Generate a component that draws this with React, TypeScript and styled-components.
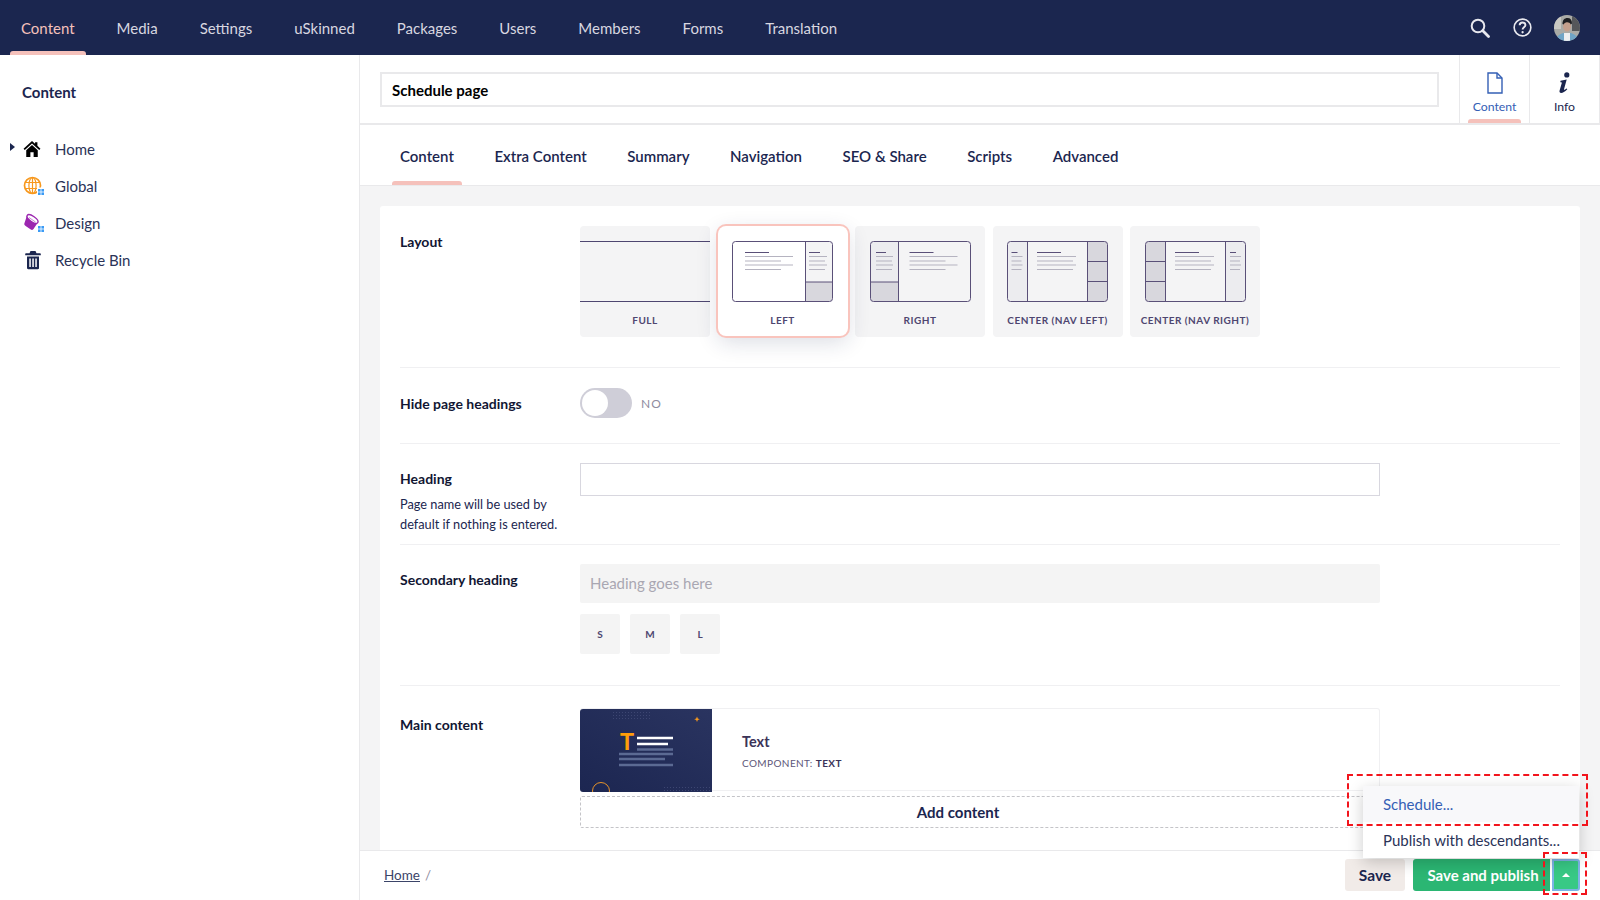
import styled, { createGlobalStyle } from 'styled-components'

const GlobalStyle = createGlobalStyle`
  html, body, #root {
    margin: 0;
    height: 100%;
  }

  body {
    font-family: Lato, "Noto Sans", sans-serif;
    color: #1b264f;
    background: #fff;
  }

  * {
    box-sizing: border-box;
  }
`

const Shell = styled.div`
  position: relative;
  width: 100%;
  height: 100vh;
  display: flex;
  flex-direction: column;
  overflow: hidden;
`

const TopBar = styled.header`
  flex: 0 0 55px;
  display: flex;
  justify-content: space-between;
  background: #1b264f;
`

const TopNav = styled.nav`
  display: flex;
`

const TopNavItem = styled.a<{ $active?: boolean }>`
  position: relative;
  display: flex;
  align-items: center;
  padding: 0 21px;
  font-size: 15px;
  color: ${(p) => (p.$active ? '#f5c1bb' : '#d8d7e0')};

  &::after {
    content: '';
    display: ${(p) => (p.$active ? 'block' : 'none')};
    position: absolute;
    left: 10px;
    right: 10px;
    bottom: 0;
    height: 4px;
    border-radius: 3px 3px 0 0;
    background: #f5c1bb;
  }
`

const TopTools = styled.div`
  display: flex;
  align-items: center;
  gap: 22.5px;
  padding-right: 20px;
`

const Body = styled.div`
  flex: 1;
  min-height: 0;
  display: flex;
`

const Sidebar = styled.aside`
  flex: 0 0 360px;
  border-right: 1px solid #e9e9eb;
  padding-top: 27px;
`

const SidebarTitle = styled.div`
  padding-left: 22px;
  margin-bottom: 28px;
  font-size: 15px;
  line-height: 20px;
  font-weight: 700;
`

const TreeRow = styled.div`
  display: grid;
  grid-template-columns: 23px 32px 1fr;
  align-items: center;
  height: 37px;
  font-size: 15px;
  color: #2a3358;
`

const TreeCaret = styled.span`
  justify-self: start;
  margin: -4px 0 0 10px;
  border-style: solid;
  border-width: 4px 0 4px 5px;
  border-color: transparent transparent transparent #1b264f;
`

const Main = styled.main`
  flex: 1;
  min-width: 0;
  display: flex;
  flex-direction: column;
`

const EditorHeader = styled.div`
  flex: 0 0 70px;
  display: flex;
  align-items: stretch;
  border-bottom: 2px solid #e9e9eb;
`

const TitleInput = styled.input`
  flex: 1;
  min-width: 0;
  height: 35px;
  margin: 17px 20px 0;
  padding: 0 10px;
  border: 2px solid #e9e9eb;
  font-family: inherit;
  font-size: 15px;
  font-weight: 700;
  color: #000;
  outline: none;
`

const AppTab = styled.div<{ $active?: boolean }>`
  position: relative;
  flex: 0 0 70px;
  display: flex;
  flex-direction: column;
  align-items: center;
  padding-top: 17px;
  gap: 5px;
  border-left: 1px solid #e9e9eb;
  font-size: 12.25px;
  line-height: 16px;
  color: ${(p) => (p.$active ? '#3560b5' : '#1b264f')};

  &:last-child {
    flex-basis: 71px;
    border-right: 1px solid #e9e9eb;
  }

  &::after {
    content: '';
    display: ${(p) => (p.$active ? 'block' : 'none')};
    position: absolute;
    left: 8px;
    right: 8px;
    bottom: 0;
    height: 4px;
    border-radius: 3px 3px 0 0;
    background: #f5c1bb;
  }
`

const Tabs = styled.div`
  flex: 0 0 61px;
  display: flex;
  gap: 24.5px;
  padding-left: 32px;
  border-bottom: 1px solid #e9e9eb;
`

const Tab = styled.a<{ $active?: boolean }>`
  position: relative;
  display: flex;
  align-items: center;
  padding: 2px 8px 0;
  font-size: 15px;
  font-weight: 600;
  color: #1b264f;

  &::after {
    content: '';
    display: ${(p) => (p.$active ? 'block' : 'none')};
    position: absolute;
    left: 0;
    right: 0;
    bottom: 0;
    height: 4px;
    border-radius: 3px 3px 0 0;
    background: #f5c1bb;
  }
`

const Content = styled.div`
  flex: 1;
  min-height: 0;
  overflow: hidden;
  padding: 20px 20px 0;
  background: #f4f4f5;
`

const Panel = styled.div`
  min-height: 100%;
  padding: 0 20px;
  background: #fff;
  border-radius: 3px 3px 0 0;
`

const Row = styled.section<{ $top: number; $bottom: number; $last?: boolean }>`
  display: grid;
  grid-template-columns: 180px 800px;
  padding: ${(p) => p.$top}px 0 ${(p) => p.$bottom}px;
  border-bottom: ${(p) => (p.$last ? 'none' : '1px solid #f0f0f2')};
`

const FieldLabel = styled.div<{ $offset?: number }>`
  margin-top: ${(p) => p.$offset ?? 5.5}px;
  font-size: 14px;
  line-height: 20px;
  font-weight: 700;
  color: #111633;
`

const FieldHint = styled.div`
  margin-top: 5px;
  font-size: 12.75px;
  line-height: 20px;
  color: #1b264f;
`

const TileRow = styled.div`
  display: flex;
  align-items: flex-start;
  gap: 7.5px;
  width: 690px;
`

const Tile = styled.div<{ $selected?: boolean }>`
  position: relative;
  flex: 0 0 130px;
  height: ${(p) => (p.$selected ? '110px' : '111px')};
  display: flex;
  flex-direction: column;
  align-items: center;
  padding-top: 15px;
  border-radius: ${(p) => (p.$selected ? '8px' : '4px')};
  background: ${(p) => (p.$selected ? '#fff' : '#f4f4f5')};
  box-shadow: ${(p) => (p.$selected ? '0 0 0 2px #f9c4bd, 0 6px 22px rgba(27, 38, 79, 0.16)' : 'none')};
  z-index: ${(p) => (p.$selected ? 1 : 0)};
`

const TileLabel = styled.div`
  margin-top: 12px;
  font-size: 10px;
  line-height: 12px;
  font-weight: 700;
  letter-spacing: 0.5px;
  color: #4e4670;
`

const FullBand = styled.div`
  width: 100%;
  height: 61px;
  border-top: 1px solid #4e4670;
  border-bottom: 1px solid #4e4670;
`

const ToggleWrap = styled.div`
  display: flex;
  align-items: center;
  gap: 9px;
`

const ToggleTrack = styled.div`
  width: 52px;
  height: 30px;
  padding: 2px;
  border-radius: 15px;
  background: #cfced8;
`

const ToggleThumb = styled.div`
  width: 26px;
  height: 26px;
  border-radius: 50%;
  background: #fff;
`

const ToggleText = styled.span`
  font-size: 12px;
  letter-spacing: 1px;
  color: #8f8ca0;
`

const HeadingInput = styled.input`
  display: block;
  width: 100%;
  height: 33px;
  padding: 0 10px;
  border: 1px solid #d8d7df;
  outline: none;
`

const GreyInput = styled.input`
  display: block;
  width: 100%;
  height: 39px;
  padding: 0 10px;
  border: none;
  border-radius: 2px;
  background: #f4f4f4;
  font-family: inherit;
  font-size: 15px;
  outline: none;

  &::placeholder {
    color: #a9a7b2;
    opacity: 1;
  }
`

const SizeButtons = styled.div`
  display: flex;
  gap: 10px;
  margin-top: 11px;
`

const SizeButton = styled.div`
  width: 40px;
  height: 40px;
  display: flex;
  align-items: center;
  justify-content: center;
  background: #f4f4f4;
  border-radius: 2px;
  font-size: 10px;
  font-weight: 700;
  color: #4e4670;
`

const Card = styled.div`
  display: flex;
  height: 83px;
  border: 1px solid #f0f0f2;
  border-left: none;
  border-radius: 3px;
`

const CardThumb = styled.svg`
  flex: 0 0 132px;
  display: block;
  border-radius: 3px 0 0 3px;
`

const CardText = styled.div`
  padding: 23px 0 0 30px;
`

const CardTitle = styled.div`
  font-size: 14.5px;
  line-height: 20px;
  font-weight: 700;
  color: #3b3358;
`

const CardMeta = styled.div`
  margin-top: 2px;
  font-size: 10px;
  line-height: 18px;
  letter-spacing: 0.4px;
  color: #5d5678;

  b {
    color: #3b3358;
  }
`

const AddContent = styled.div`
  height: 32px;
  margin-top: 5px;
  padding-right: 44px;
  display: flex;
  align-items: center;
  justify-content: center;
  border: 1px dashed #c4c4c8;
  border-radius: 2px;
  font-size: 15px;
  font-weight: 700;
  color: #1b264f;
`

const Footer = styled.footer`
  flex: 0 0 50px;
  display: flex;
  align-items: center;
  justify-content: space-between;
  padding: 0 20px 2px 24px;
  border-top: 1px solid #e9e9eb;
`

const Breadcrumb = styled.div`
  font-size: 13.5px;
  color: #8f8ca0;

  a {
    color: #3b4468;
    text-decoration: underline;
    margin-right: 5px;
  }
`

const FooterActions = styled.div`
  display: flex;
  align-items: center;
  gap: 8px;
`

const SaveButton = styled.div`
  width: 60px;
  height: 32px;
  display: flex;
  align-items: center;
  justify-content: center;
  background: #f1ebe8;
  border-radius: 3px;
  font-size: 15.5px;
  font-weight: 700;
  color: #1b264f;
`

const PublishGroup = styled.div`
  display: flex;
  gap: 2px;
`

const PublishButton = styled.div`
  width: 137px;
  height: 32px;
  padding-left: 3px;
  display: flex;
  align-items: center;
  justify-content: center;
  background: #2bb673;
  border-radius: 3px 0 0 3px;
  font-size: 15px;
  font-weight: 700;
  color: #fff;
`

const CaretButton = styled.div`
  width: 28px;
  height: 32px;
  display: flex;
  align-items: center;
  justify-content: center;
  background: #38c985;
  border: 2px solid #7db4e6;
  border-radius: 0 3px 3px 0;

  &::before {
    content: '';
    border-style: solid;
    border-width: 0 4px 4px;
    border-color: transparent transparent #fff;
  }
`

const Menu = styled.div`
  position: absolute;
  left: 1363px;
  top: 786px;
  width: 216px;
  height: 72px;
  background: #fff;
  border-radius: 3px;
  box-shadow: 0 4px 16px rgba(0, 0, 0, 0.2);
  z-index: 3;
`

const MenuItem = styled.div<{ $active?: boolean }>`
  height: 36px;
  display: flex;
  align-items: center;
  padding-left: 20px;
  font-size: 15px;
  color: ${(p) => (p.$active ? '#3560b5' : '#2a3358')};
  background: ${(p) => (p.$active ? '#f8f8fa' : '#fff')};
`

const Callout = styled.div<{ $x: number; $y: number; $w: number; $h: number }>`
  position: absolute;
  left: ${(p) => p.$x}px;
  top: ${(p) => p.$y}px;
  width: ${(p) => p.$w}px;
  height: ${(p) => p.$h}px;
  border: 2px dashed #f2141c;
  z-index: 4;
  pointer-events: none;
`

const GridBadge = () => (
  <g stroke="none">
    <rect x="14" y="12.500" width="8" height="8" fill="#fff" />
    <rect x="15" y="14" width="2.600" height="2.600" fill="#3b9bf5" />
    <rect x="18.400" y="14" width="2.600" height="2.600" fill="#3b9bf5" />
    <rect x="15" y="17.400" width="2.600" height="2.600" fill="#3b9bf5" />
    <rect x="18.400" y="17.400" width="2.600" height="2.600" fill="#3b9bf5" />
  </g>
)

const HomeIcon = () => (
  <svg width="18" height="18" viewBox="0 0 20 20" fill="#000">
    <path d="M10 1 .6 9.600l1.400 1.500L10 3.800l8 7.300 1.400-1.500L16 6.500V2.500h-2.600v1.600z" />
    <path d="M3.600 11.400 10 5.600l6.400 5.800V19h-4.600v-5.400H8.200V19H3.600z" />
  </svg>
)

const GlobeIcon = () => (
  <svg width="24" height="22" viewBox="0 0 24 22" fill="none" stroke="#f7981d" strokeWidth="1.200">
    <circle cx="9.500" cy="10.500" r="8" strokeWidth="1.700" />
    <ellipse cx="9.500" cy="10.500" rx="3.600" ry="8" />
    <path d="M2 7.500h15M2 13.500h15M9.500 2.500v16" />
    <GridBadge />
  </svg>
)

const DesignIcon = () => (
  <svg width="24" height="22" viewBox="0 0 24 22">
    <path d="M4 3.500 14.500 11 10.500 17c-.7.9-1.700 1.200-2.700.6L2.600 14C1.400 13.200 1 12.200 1.500 11z" fill="#9c27b0" />
    <ellipse cx="9.500" cy="7" rx="6.400" ry="2.700" transform="rotate(35 9.500 7)" fill="#fff" stroke="#9c27b0" strokeWidth="1.400" />
    <path d="M6 5.500l6.500 4.500" stroke="#c98ad6" strokeWidth="1" />
    <GridBadge />
  </svg>
)

const TrashIcon = () => (
  <svg width="20" height="20" viewBox="0 0 20 20" fill="#1b264f">
    <path d="M7.500 1h5l1 2.200H17c.5 0 .8.400.8.900v1.200H2.200V4.100c0-.5.300-.9.800-.9h3.500z" />
    <path d="M4 6.500h12V18c0 .8-.5 1.200-1.200 1.200H5.200C4.500 19.200 4 18.800 4 18zm2.300 2v8.500h1.500V8.500zm3 0v8.500h1.500V8.500zm3 0v8.500h1.500V8.500z" fillRule="evenodd" />
  </svg>
)

const SearchIcon = () => (
  <svg width="20" height="20" viewBox="0 0 20 20" fill="none" stroke="#e8e8ee">
    <circle cx="8" cy="8" r="6.300" strokeWidth="2" />
    <path d="M12.800 12.800 18.500 18.500" strokeWidth="2.800" strokeLinecap="round" />
  </svg>
)

const HelpIcon = () => (
  <svg width="19" height="19" viewBox="0 0 20 20" fill="none" stroke="#e8e8ee" strokeWidth="1.700">
    <circle cx="10" cy="10" r="8.800" />
    <path d="M7 7.700c0-1.800 1.400-2.900 3.100-2.900 1.800 0 3 1.100 3 2.600 0 2.400-3 2.400-3 4.800" strokeWidth="2" />
    <circle cx="10.100" cy="15" r="1.200" fill="#e8e8ee" stroke="none" />
  </svg>
)

const Avatar = () => (
  <svg width="26" height="26" viewBox="0 0 26 26">
    <defs>
      <clipPath id="avatar-clip">
        <circle cx="13" cy="13" r="13" />
      </clipPath>
    </defs>
    <g clipPath="url(#avatar-clip)">
      <rect width="26" height="26" fill="#a9aaa6" />
      <rect x="18" width="8" height="16" fill="#55575a" />
      <rect y="0" width="7" height="14" fill="#c9c8c2" />
      <path d="M2 26c0-5 4-7 7-8h8c3 1 7 3 7 8z" fill="#6fa4c6" />
      <path d="M10 18h6v8h-6z" fill="#eceef0" />
      <ellipse cx="13" cy="11" rx="4" ry="5.500" fill="#c49f8c" />
      <path d="M8.500 9c0-4 2-6 5-6s4.500 2 4.500 5.500l-1.200 1C16 7.500 14 7 12 7.400c-1 .2-2 .8-2.300 2z" fill="#1e1f22" />
    </g>
  </svg>
)

const PageIcon = () => (
  <svg width="16" height="22" viewBox="0 0 16 22" fill="none" stroke="#3560b5" strokeWidth="1.400">
    <path d="M1 1h9l5 5v15H1z" />
    <path d="M10 1v5h5" />
  </svg>
)

const InfoIcon = () => (
  <svg width="16" height="22" viewBox="0 0 16 22" fill="#1b264f">
    <circle cx="9.800" cy="2.900" r="2.600" />
    <path d="M3.500 8.800 9.700 7.500 7 17.300c-.2.800.4.900 2.700-.8l.6.800C7.800 20 5.800 21 4.200 21c-1.500 0-2-1.100-1.600-2.500l2.200-7.500c.2-.7-.3-.9-1.500-.7z" />
  </svg>
)

type LayoutVariant = 'left' | 'right' | 'navLeft' | 'navRight'

const LINE = '#b5b3c0'
const DARK = '#5a5078'
const EDGE = '#5a5078'
const BLOCK = '#d8d7dd'
const SIDE = '#ececef'

const TextLines = ({ x, w1, w2, tw }: { x: number; w1: number; w2: number; tw: number }) => (
  <g strokeWidth="1">
    <path d={`M${x} 11.500h${tw}`} stroke={DARK} />
    <path d={`M${x} 15.500h${w1}M${x} 20h${w2}M${x} 24h${w1}M${x} 28.500h${w2}`} stroke={LINE} />
  </g>
)

const LayoutPreview = ({ variant, fill }: { variant: LayoutVariant; fill: string }) => {
  const clip = `layout-${variant}`

  return (
    <svg width="101" height="61" viewBox="0 0 101 61">
      <defs>
        <clipPath id={clip}>
          <rect x="0.500" y="0.500" width="100" height="60" rx="3" />
        </clipPath>
      </defs>
      <g clipPath={`url(#${clip})`}>
        <rect width="101" height="61" fill={fill} />
        {variant === 'left' && (
          <>
            <rect x="73.500" width="28" height="41" fill="#f4f4f5" />
            <rect x="73.500" y="41" width="28" height="20" fill={BLOCK} />
            <path d="M73.500 0v61M73.500 41h28" stroke={EDGE} />
          </>
        )}
        {variant === 'right' && (
          <>
            <rect width="28" height="41" fill={SIDE} />
            <rect y="41" width="28" height="20" fill={BLOCK} />
            <path d="M28.500 0v61M0 41h28" stroke={EDGE} />
          </>
        )}
        {variant === 'navLeft' && (
          <>
            <rect width="20.500" height="61" fill={SIDE} />
            <rect x="80" width="21" height="61" fill={BLOCK} />
            <path d="M20.500 0v61M80.500 0v61M80 20.500h21M80 40.500h21" stroke={EDGE} />
          </>
        )}
        {variant === 'navRight' && (
          <>
            <rect width="20.500" height="61" fill={BLOCK} />
            <rect x="80" width="21" height="61" fill={SIDE} />
            <path d="M20.500 0v61M80.500 0v61M0 20.500h20M0 40.500h20" stroke={EDGE} />
          </>
        )}
      </g>
      <rect x="0.500" y="0.500" width="100" height="60" rx="3" fill="none" stroke={EDGE} />
      {variant === 'left' && (
        <>
          <TextLines x={13} w1={48} w2={36} tw={24} />
          <TextLines x={77} w1={18} w2={16} tw={11} />
        </>
      )}
      {variant === 'right' && (
        <>
          <TextLines x={6} w1={17} w2={16} tw={10} />
          <TextLines x={39.500} w1={48} w2={36} tw={24} />
        </>
      )}
      {variant === 'navLeft' && (
        <>
          <TextLines x={4.500} w1={11} w2={10} tw={6} />
          <TextLines x={30} w1={39} w2={36} tw={24} />
        </>
      )}
      {variant === 'navRight' && (
        <>
          <TextLines x={30} w1={39} w2={36} tw={24} />
          <TextLines x={85} w1={11} w2={10} tw={6} />
        </>
      )}
    </svg>
  )
}

const TextThumb = () => (
  <CardThumb width="132" height="83" viewBox="0 0 132 83">
    <defs>
      <linearGradient id="thumb-bg" x1="0" y1="1" x2="1" y2="0">
        <stop offset="0" stopColor="#1c2651" />
        <stop offset="1" stopColor="#2a3460" />
      </linearGradient>
      <pattern id="thumb-dots" width="3" height="3" patternUnits="userSpaceOnUse">
        <rect width="1" height="1" fill="#3d4672" />
      </pattern>
    </defs>
    <rect width="132" height="83" fill="url(#thumb-bg)" />
    <rect x="31" y="2" width="40" height="10" fill="url(#thumb-dots)" />
    <rect x="82" y="76" width="48" height="6" fill="url(#thumb-dots)" />
    <path d="M117 7.500l.8 2 2 .8-2 .8-.8 2-.8-2-2-.8 2-.8z" fill="#f7981d" />
    <circle cx="21" cy="82" r="8.500" fill="none" stroke="#e5932a" strokeWidth="1" />
    <text x="47" y="41" textAnchor="middle" fontFamily="Liberation Sans, sans-serif" fontWeight="700" fontSize="23" fill="#ff9d0a">
      T
    </text>
    <path d="M57 29h36M57 35h31" stroke="#fff" strokeWidth="2.400" />
    <path d="M57 40.500h36M39 45h54M39 50h46M39 56h54" stroke="#5b6a93" strokeWidth="2.400" />
  </CardThumb>
)

const navItems = ['Content', 'Media', 'Settings', 'uSkinned', 'Packages', 'Users', 'Members', 'Forms', 'Translation']
const tabItems = ['Content', 'Extra Content', 'Summary', 'Navigation', 'SEO & Share', 'Scripts', 'Advanced']

const App = () => {
  return (
    <Shell>
      <GlobalStyle />
      <TopBar>
        <TopNav>
          {navItems.map((item, i) => (
            <TopNavItem key={item} $active={i === 0}>
              {item}
            </TopNavItem>
          ))}
        </TopNav>
        <TopTools>
          <SearchIcon />
          <HelpIcon />
          <Avatar />
        </TopTools>
      </TopBar>

      <Body>
        <Sidebar>
          <SidebarTitle>Content</SidebarTitle>
          <TreeRow>
            <TreeCaret />
            <HomeIcon />
            Home
          </TreeRow>
          <TreeRow>
            <span />
            <GlobeIcon />
            Global
          </TreeRow>
          <TreeRow>
            <span />
            <DesignIcon />
            Design
          </TreeRow>
          <TreeRow>
            <span />
            <TrashIcon />
            Recycle Bin
          </TreeRow>
        </Sidebar>

        <Main>
          <EditorHeader>
            <TitleInput readOnly defaultValue="Schedule page" />
            <AppTab $active>
              <PageIcon />
              Content
            </AppTab>
            <AppTab>
              <InfoIcon />
              Info
            </AppTab>
          </EditorHeader>

          <Tabs>
            {tabItems.map((item, i) => (
              <Tab key={item} $active={i === 0}>
                {item}
              </Tab>
            ))}
          </Tabs>

          <Content>
            <Panel>
              <Row $top={20} $bottom={30}>
                <FieldLabel>Layout</FieldLabel>
                <TileRow>
                  <Tile>
                    <FullBand />
                    <TileLabel>FULL</TileLabel>
                  </Tile>
                  <Tile $selected>
                    <LayoutPreview variant="left" fill="#fff" />
                    <TileLabel>LEFT</TileLabel>
                  </Tile>
                  <Tile>
                    <LayoutPreview variant="right" fill="#f4f4f5" />
                    <TileLabel>RIGHT</TileLabel>
                  </Tile>
                  <Tile>
                    <LayoutPreview variant="navLeft" fill="#f4f4f5" />
                    <TileLabel>CENTER (NAV LEFT)</TileLabel>
                  </Tile>
                  <Tile>
                    <LayoutPreview variant="navRight" fill="#f4f4f5" />
                    <TileLabel>CENTER (NAV RIGHT)</TileLabel>
                  </Tile>
                </TileRow>
              </Row>

              <Row $top={20} $bottom={25}>
                <FieldLabel>Hide page headings</FieldLabel>
                <ToggleWrap>
                  <ToggleTrack>
                    <ToggleThumb />
                  </ToggleTrack>
                  <ToggleText>NO</ToggleText>
                </ToggleWrap>
              </Row>

              <Row $top={19} $bottom={10}>
                <div>
                  <FieldLabel>Heading</FieldLabel>
                  <FieldHint>
                    Page name will be used by
                    <br />
                    default if nothing is entered.
                  </FieldHint>
                </div>
                <div>
                  <HeadingInput />
                </div>
              </Row>

              <Row $top={19} $bottom={31}>
                <FieldLabel $offset={6.5}>Secondary heading</FieldLabel>
                <div>
                  <GreyInput placeholder="Heading goes here" />
                  <SizeButtons>
                    <SizeButton>S</SizeButton>
                    <SizeButton>M</SizeButton>
                    <SizeButton>L</SizeButton>
                  </SizeButtons>
                </div>
              </Row>

              <Row $top={22} $bottom={0} $last>
                <FieldLabel $offset={7.5}>Main content</FieldLabel>
                <div>
                  <Card>
                    <TextThumb />
                    <CardText>
                      <CardTitle>Text</CardTitle>
                      <CardMeta>
                        COMPONENT: <b>TEXT</b>
                      </CardMeta>
                    </CardText>
                  </Card>
                  <AddContent>Add content</AddContent>
                </div>
              </Row>
            </Panel>
          </Content>

          <Footer>
            <Breadcrumb>
              <a>Home</a>/
            </Breadcrumb>
            <FooterActions>
              <SaveButton>Save</SaveButton>
              <PublishGroup>
                <PublishButton>Save and publish</PublishButton>
                <CaretButton />
              </PublishGroup>
            </FooterActions>
          </Footer>
        </Main>
      </Body>

      <Menu>
        <MenuItem $active>Schedule...</MenuItem>
        <MenuItem>Publish with descendants...</MenuItem>
      </Menu>
      <Callout $x={1347} $y={774} $w={241} $h={52} />
      <Callout $x={1543} $y={852} $w={44} $h={43} />
    </Shell>
  )
}

export default App
